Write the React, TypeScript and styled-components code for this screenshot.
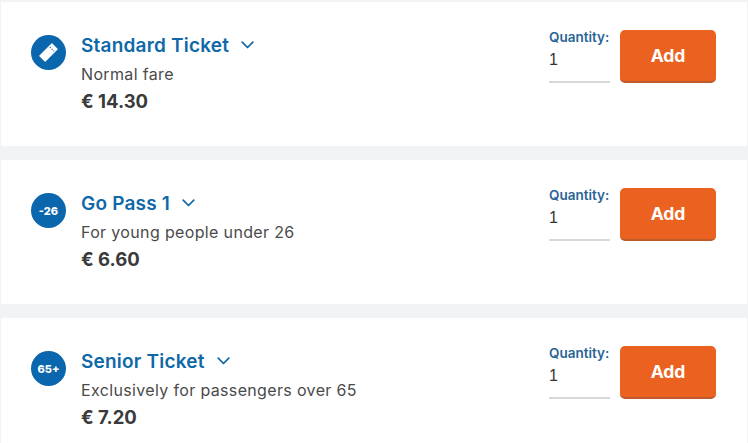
import React from "react";
import styled, { createGlobalStyle } from "styled-components";

type Ticket = {
  name: string;
  description: string;
  price: string;
  badge?: string;
};

const tickets: Ticket[] = [
  { name: "Standard Ticket", description: "Normal fare", price: "€ 14.30" },
  { name: "Go Pass 1", description: "For young people under 26", price: "€ 6.60", badge: "-26" },
  { name: "Senior Ticket", description: "Exclusively for passengers over 65", price: "€ 7.20", badge: "65+" },
];

const GlobalStyle = createGlobalStyle`
  html, body {
    margin: 0;
    height: 100%;
    overflow: hidden;
    background: #f1f3f5;
    font-family: "Inter", "Liberation Sans", sans-serif;
  }
`;

const List = styled.div`
  display: flex;
  flex-direction: column;
  gap: 14px;
  padding: 2px 1px 0;
`;

const Card = styled.div`
  display: flex;
  justify-content: space-between;
  align-items: flex-start;
  height: 144px;
  flex-shrink: 0;
  background: #fff;
  padding: 28px 31px 0 30px;
  box-sizing: border-box;
`;

const Info = styled.div`
  display: flex;
  gap: 15px;
`;

const Badge = styled.div`
  width: 35px;
  height: 35px;
  margin-top: 5px;
  border-radius: 50%;
  background: #0b67ad;
  color: #fff;
  font-size: 11px;
  font-weight: 800;
  display: flex;
  align-items: center;
  justify-content: center;
`;

const Details = styled.div`
  display: flex;
  flex-direction: column;
`;

const TitleRow = styled.div`
  display: flex;
  align-items: center;
  gap: 12px;
  height: 30px;
`;

const Title = styled.span`
  color: #0f68a8;
  font-size: 19px;
  font-weight: 600;
  letter-spacing: 0.2px;
`;

const Description = styled.div`
  color: #4a4a4a;
  font-size: 16px;
  line-height: 28px;
  letter-spacing: 0.35px;
`;

const Price = styled.div`
  color: #3a3a3a;
  font-size: 18.5px;
  font-weight: 700;
  line-height: 27px;
`;

const Actions = styled.div`
  display: flex;
  gap: 10px;
`;

const Quantity = styled.label`
  display: flex;
  flex-direction: column;
  width: 61px;
`;

const QuantityLabel = styled.span`
  color: #2a6496;
  font-size: 13.5px;
  font-weight: 600;
  line-height: 15px;
  white-space: nowrap;
`;

const QuantityInput = styled.input`
  width: 100%;
  height: 38px;
  padding: 0 0 7px;
  border: 0;
  border-bottom: 2px solid #d8d8d8;
  background: transparent;
  color: #333;
  font-family: "Liberation Sans", sans-serif;
  font-size: 16px;
  box-sizing: border-box;
  outline: none;
`;

const AddButton = styled.button`
  width: 96px;
  height: 53px;
  border: 0;
  border-radius: 5px;
  border-bottom: 2px solid #bf5a2a;
  background: #eb6220;
  color: #fff;
  font-family: inherit;
  font-size: 17.5px;
  font-weight: 700;
  cursor: pointer;
`;

const TicketIcon = () => (
  <svg width="23" height="23" viewBox="0 0 21 21">
    <path
      d="M13.6 2.6 18.4 7.4 7.4 18.4 2.6 13.6Z"
      fill="#fff"
      stroke="#fff"
      strokeLinejoin="round"
      strokeWidth="1.2"
    />
    <path d="M11.6 5.4 15.6 9.4" stroke="#0b67ad" strokeWidth="1" strokeDasharray="1.2 1.2" />
  </svg>
);

const Chevron = () => (
  <svg width="13" height="8" viewBox="0 0 13 8" fill="none">
    <path d="M1.2 1.2 6.5 6.5l5.3-5.3" stroke="#0f68a8" strokeWidth="1.7" strokeLinecap="round" strokeLinejoin="round" />
  </svg>
);

export default function App() {
  return (
    <>
      <GlobalStyle />
      <List>
        {tickets.map((ticket) => (
          <Card key={ticket.name}>
            <Info>
              <Badge>{ticket.badge ?? <TicketIcon />}</Badge>
              <Details>
                <TitleRow>
                  <Title>{ticket.name}</Title>
                  <Chevron />
                </TitleRow>
                <Description>{ticket.description}</Description>
                <Price>{ticket.price}</Price>
              </Details>
            </Info>
            <Actions>
              <Quantity>
                <QuantityLabel>Quantity:</QuantityLabel>
                <QuantityInput defaultValue="1" />
              </Quantity>
              <AddButton>Add</AddButton>
            </Actions>
          </Card>
        ))}
      </List>
    </>
  );
}
